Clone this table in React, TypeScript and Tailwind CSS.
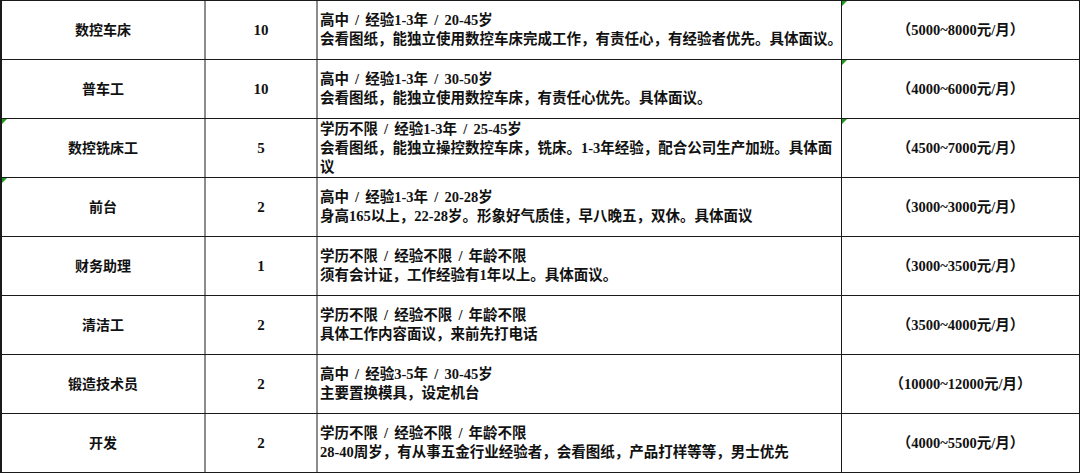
import React from "react";

type Row = { title: string; num: string; lines: string[]; pay: string; markL?: boolean; markR?: boolean };

const rows: Row[] = [
  { title: "数控车床", num: "10", lines: ["高中 / 经验1-3年 / 20-45岁", "会看图纸，能独立使用数控车床完成工作，有责任心，有经验者优先。具体面议。"], pay: "（5000~8000元/月）", markR: true },
  { title: "普车工", num: "10", lines: ["高中 / 经验1-3年 / 30-50岁", "会看图纸，能独立使用数控车床，有责任心优先。具体面议。"], pay: "（4000~6000元/月）", markR: true },
  { title: "数控铣床工", num: "5", lines: ["学历不限 / 经验1-3年 / 25-45岁", "会看图纸，能独立操控数控车床，铣床。1-3年经验，配合公司生产加班。具体面", "议"], pay: "（4500~7000元/月）", markL: true, markR: true },
  { title: "前台", num: "2", lines: ["高中 / 经验1-3年 / 20-28岁", "身高165以上，22-28岁。形象好气质佳，早八晚五，双休。具体面议"], pay: "（3000~3000元/月）", markL: true },
  { title: "财务助理", num: "1", lines: ["学历不限 / 经验不限 / 年龄不限", "须有会计证，工作经验有1年以上。具体面议。"], pay: "（3000~3500元/月）" },
  { title: "清洁工", num: "2", lines: ["学历不限 / 经验不限 / 年龄不限", "具体工作内容面议，来前先打电话"], pay: "（3500~4000元/月）" },
  { title: "锻造技术员", num: "2", lines: ["高中 / 经验3-5年 / 30-45岁", "主要置换模具，设定机台"], pay: "（10000~12000元/月）" },
  { title: "开发", num: "2", lines: ["学历不限 / 经验不限 / 年龄不限", "28-40周岁，有从事五金行业经验者，会看图纸，产品打样等等，男士优先"], pay: "（4000~5500元/月）" },
];

function Mark() {
  return (
    <span className="absolute left-0 top-0 w-0 h-0 border-t-[5px] border-r-[5px] border-t-[#1f9a1f] border-r-transparent" />
  );
}

export default function App() {
  return (
    <div
      className="w-[1080px] h-[473px] bg-white text-[#111] font-bold text-[14.5px] leading-[19px]"
      style={{ fontFamily: '"Liberation Serif", "Noto Sans CJK SC", serif' }}
    >
      <div className="border-t border-l-2 border-r border-[#1a1a1a]">
        {rows.map((r, i) => (
          <div key={i} className="flex h-[59px] border-b-[1.5px] border-[#1a1a1a]">
            <div className="relative w-[204px] shrink-0 flex items-center justify-center border-r-2 border-[#8c8c8c] text-[14px]">
              {r.markL && <Mark />}
              {r.title}
            </div>
            <div className="w-[112px] shrink-0 flex items-center justify-center border-r-2 border-[#8c8c8c] text-[15px]">
              {r.num}
            </div>
            <div className="w-[524px] shrink-0 flex flex-col justify-center pl-[2px] border-r border-[#1a1a1a] whitespace-nowrap [word-spacing:2.5px]">
              {r.lines.map((l, j) => (
                <div key={j}>{l}</div>
              ))}
            </div>
            <div className="relative flex-1 flex items-center justify-center">
              {r.markR && <Mark />}
              {r.pay}
            </div>
          </div>
        ))}
      </div>
    </div>
  );
}
